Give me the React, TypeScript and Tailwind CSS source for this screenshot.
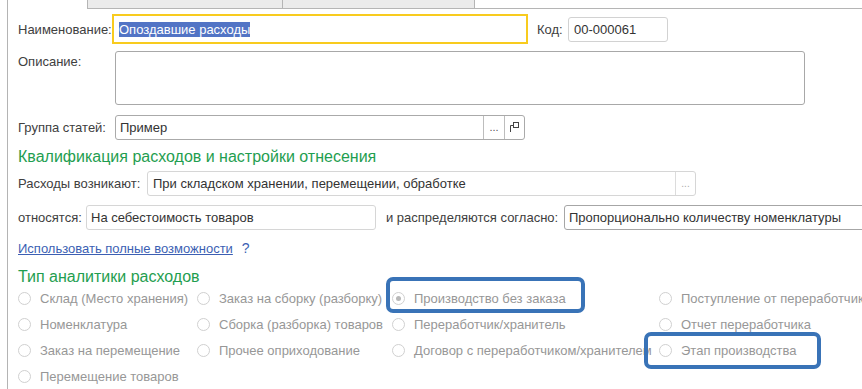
import React from "react";

const radios: { label: string; col: number; checked?: boolean }[][] = [
  [
    { label: "Склад (Место хранения)", col: 0 },
    { label: "Заказ на сборку (разборку)", col: 1 },
    { label: "Производство без заказа", col: 2, checked: true },
    { label: "Поступление от переработчика", col: 3 },
  ],
  [
    { label: "Номенклатура", col: 0 },
    { label: "Сборка (разборка) товаров", col: 1 },
    { label: "Переработчик/хранитель", col: 2 },
    { label: "Отчет переработчика", col: 3 },
  ],
  [
    { label: "Заказ на перемещение", col: 0 },
    { label: "Прочее оприходование", col: 1 },
    { label: "Договор с переработчиком/хранителем", col: 2 },
    { label: "Этап производства", col: 3 },
  ],
  [{ label: "Перемещение товаров", col: 0 }],
];

const colWidths = ["w-[179px]", "w-[195px]", "w-[267px]", "w-[220px]"];

function Radio({ label, checked }: { label: string; checked?: boolean }) {
  return (
    <div className="flex items-center gap-[9px] whitespace-nowrap overflow-hidden">
      <span className="w-[13px] h-[13px] shrink-0 rounded-full border border-[#d0d0d0] bg-white flex items-center justify-center">
        {checked && <span className="w-[5px] h-[5px] rounded-full bg-[#b8b8b8]" />}
      </span>
      <span className="text-[#979797]">{label}</span>
    </div>
  );
}

export default function App() {
  return (
    <div
      className="relative w-[862px] h-[389px] overflow-hidden bg-white text-[13px] leading-[15px] text-[#404040]"
      style={{ fontFamily: '"Liberation Sans", Arial, sans-serif' }}
    >
      <div className="ml-[7px] h-full border-l border-[#b4b4b4]">
        {/* вкладки сверху (обрезаны) */}
        <div className="flex h-[9px] ml-[79px] border-b border-[#b5b5b5]">
          <div className="w-[196px] bg-[#ebebeb] border-r border-l border-[#b5b5b5]" />
          <div className="w-[192px] bg-[#ebebeb] border-r border-[#b5b5b5]" />
        </div>

        <div className="pl-[10px]">
          {/* Наименование / Код */}
          <div className="flex items-center h-[30px] mt-[5px]">
            <div className="w-[94px] shrink-0">Наименование:</div>
            <div className="w-[416px] shrink-0 h-[30px] border-2 border-[#f8cb1e] flex items-center pl-[5px]">
              <span className="bg-[#5274c5] text-white leading-[15px]">Опоздавшие расходы</span>
            </div>
            <div className="ml-[9px] w-[31px] shrink-0">Код:</div>
            <div className="w-[100px] shrink-0 h-[25px] border border-[#d2d2d2] rounded-[3px] flex items-center pl-[5px] text-[#333]">
              00-000061
            </div>
          </div>

          {/* Описание */}
          <div className="flex mt-[7px]">
            <div className="w-[97px] shrink-0 pt-[3px]">Описание:</div>
            <div className="w-[690px] shrink-0 h-[54px] border border-[#a8a8a8] rounded-[3px]" />
          </div>

          {/* Группа статей */}
          <div className="flex items-center mt-[10px]">
            <div className="w-[97px] shrink-0">Группа статей:</div>
            <div className="w-[410px] shrink-0 h-[25px] border border-[#aaaaaa] rounded-[3px] flex">
              <div className="flex-1 flex items-center pl-[4px] text-[#333]">Пример</div>
              <div className="w-[21px] border-l border-[#bdbdbd] flex items-center justify-center text-[#555] text-[11px]">
                ...
              </div>
              <div className="w-[20px] border-l border-[#bdbdbd] flex items-center justify-center">
                <svg width="11" height="11" viewBox="0 0 11 11" fill="none" stroke="#444" strokeWidth="1">
                  <rect x="4.5" y="0.5" width="5" height="5" />
                  <path d="M1.5 10V3.5H4" />
                </svg>
              </div>
            </div>
          </div>

          {/* Квалификация */}
          <div className="mt-[8px] text-[16px] leading-[18px] text-[#1f9e50]">
            Квалификация расходов и настройки отнесения
          </div>

          <div className="flex items-center mt-[5px]">
            <div className="w-[129px] shrink-0">Расходы возникают:</div>
            <div className="w-[549px] shrink-0 h-[25px] border border-[#d6d6d6] rounded-[3px] flex">
              <div className="flex-1 flex items-center pl-[5px] text-[#333]">
                При складском хранении, перемещении, обработке
              </div>
              <div className="w-[20px] border-l border-[#dcdcdc] flex items-center justify-center text-[#aaa] text-[10px]">
                ...
              </div>
            </div>
          </div>

          <div className="flex items-center mt-[9px]">
            <div className="w-[68px] shrink-0">относятся:</div>
            <div className="w-[290px] shrink-0 h-[25px] border border-[#d6d6d6] rounded-[3px] flex items-center pl-[4px] text-[#333]">
              На себестоимость товаров
            </div>
            <div className="ml-[10px] w-[178px] shrink-0 whitespace-nowrap">и распределяются согласно:</div>
            <div className="w-[320px] shrink-0 h-[25px] border border-[#a6a6a6] rounded-[3px] flex items-center pl-[4px] text-[#333] whitespace-nowrap">
              Пропорционально количеству номенклатуры
            </div>
          </div>

          <div className="mt-[11px] flex items-center gap-[9px] text-[#3c5fb3]">
            <span className="underline">Использовать полные возможности</span>
            <span className="text-[14px]">?</span>
          </div>

          <div className="mt-[12px] text-[16px] leading-[18px] text-[#1f9e50]">Тип аналитики расходов</div>

          <div className="-mt-[1px]">
            {radios.map((row, i) => (
              <div key={i} className="flex items-center h-[26px]">
                {row.map((r) => (
                  <div key={r.label} className={`${colWidths[r.col]} shrink-0`}>
                    <Radio label={r.label} checked={r.checked} />
                  </div>
                ))}
              </div>
            ))}
          </div>
        </div>
      </div>

      {/* пометки поверх формы */}
      <div className="absolute left-[386px] top-[277px] w-[199px] h-[36px] border-4 border-[#3973b7] rounded-[7px]" />
      <div className="absolute left-[644px] top-[332px] w-[177px] h-[37px] border-4 border-[#3973b7] rounded-[7px]" />
    </div>
  );
}
